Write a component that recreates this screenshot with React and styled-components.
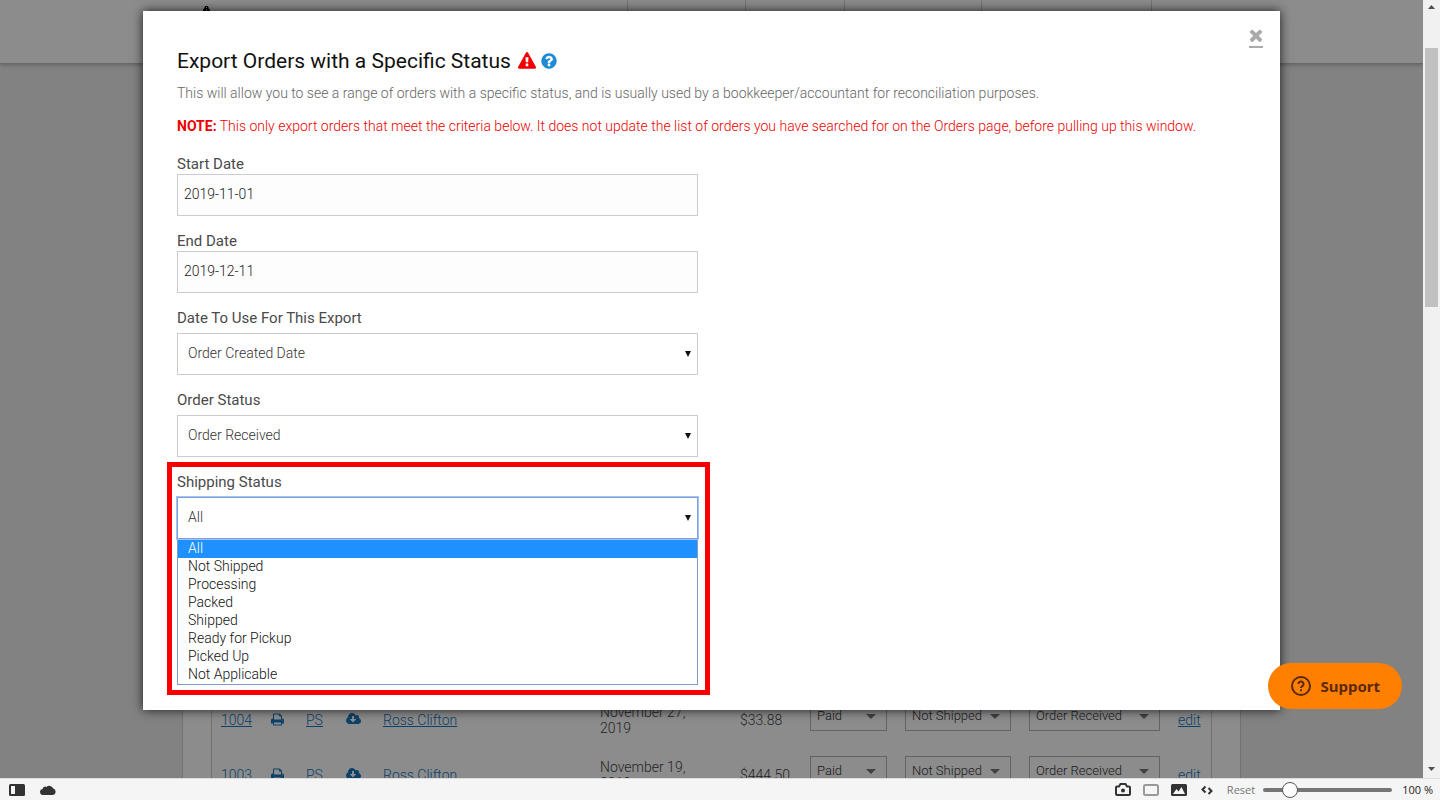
import { useState } from "react"
import styled, { createGlobalStyle } from "styled-components"

const GlobalStyle = createGlobalStyle`
* {
box-sizing: border-box;
}
body {
margin: 0;
font-family: Roboto, "Liberation Sans", sans-serif;
font-size: 14px;
font-weight: 300;
color: #222;
}
`
const Window = styled.div`
display: grid;
grid-template-rows: 1fr 22px;
height: 100vh;
overflow: hidden;
`
const Viewport = styled.div`
display: flex;
min-height: 0;
`
const Page = styled.div`
position: relative;
flex: 1;
display: flex;
flex-direction: column;
overflow: hidden;
background-color: #ededed;
`

/* page behind the popup */
const Header = styled.header`
flex: none;
height: 64px;
background-color: #fff;
border-bottom: 1px solid #bdbdbd;
box-shadow: 0 1px 4px rgba(0,0,0,0.25);
`
const HeaderInner = styled.div`
display: flex;
justify-content: space-between;
max-width: 1059px;
height: 100%;
margin: 0 auto;
padding-left: 20px;
`
const Nav = styled.nav`
display: grid;
grid-template-columns: 118px 99px 137px 170px 90px;
`
const NavCell = styled.span`
border-left: 1px solid #d2d2d2;
`
const Main = styled.main`
flex: 1;
display: flex;
flex-direction: column;
justify-content: flex-end;
width: 100%;
max-width: 1059px;
min-height: 0;
margin: 0 auto;
padding: 0 28px;
background-color: #fff;
border: solid #d0d0d0;
border-width: 0 1px;
`
const TableBox = styled.div`
flex: 1;
display: flex;
flex-direction: column;
justify-content: flex-end;
border: solid #d0d0d0;
border-width: 0 1px;
min-height: 0;
`
const Orders = styled.table`
width: 100%;
margin-bottom: -24px;
table-layout: fixed;
border-collapse: collapse;
`
const Cell = styled.td`
height: 55px;
padding: 0 0 0 9px;
line-height: 16px;
vertical-align: middle;
color: #444;
`
const PageLink = styled.a`
color: #1678be;
svg {
vertical-align: -1px;
}
`
const SmallSelect = styled.div`
position: relative;
display: flex;
width: ${props => props.$width}px;
margin-bottom: 8px;
select {
width: 100%;
height: 30px;
padding: 0 6px;
appearance: none;
background: none;
border: 1px solid #b4b4b4;
border-radius: 0;
font: inherit;
font-size: 13px;
color: #333;
}
svg {
position: absolute;
top: 13px;
right: 11px;
pointer-events: none;
}
`

/* popup */
const Overlay = styled.div`
position: absolute;
inset: 0;
padding-top: 11px;
background-color: rgba(0,0,0,0.45);
`
const Modal = styled.section`
display: flex;
flex-direction: column;
max-width: 1137px;
margin: 0 auto;
padding: 0 34px 15px;
position: relative;
background-color: #fff;
box-shadow: 0 0 10px rgba(0,0,0,0.8);
`
const CloseButton = styled.button`
position: absolute;
top: 18px;
right: 17px;
width: 14px;
height: 19px;
padding: 0 0 4px;
background: none;
border: none;
border-bottom: 2px solid #aaa;
color: #aaa;
cursor: pointer;
svg {
display: block;
}
`
const Title = styled.h1`
display: flex;
align-items: center;
gap: 7px;
margin: 36px 0 0;
font-size: 21px;
font-weight: 400;
line-height: 28px;
color: #111;
`
const TitleIcons = styled.span`
display: flex;
gap: 4px;
`
const TitleIcon = styled.span`
display: flex;
color: ${props => props.$color};
`
const Lead = styled.p`
margin: ${props => props.$top}px 0 0;
line-height: 20px;
color: ${props => props.$color};
b {
font-weight: 700;
}
`
const Form = styled.form`
display: flex;
flex-direction: column;
width: 521px;
max-width: 100%;
margin-top: 18px;
`
const Field = styled.div`
display: flex;
flex-direction: column;
gap: ${props => props.$gap}px;
margin-bottom: ${props => props.$last ? 0 : 15}px;
`
const Label = styled.label`
font-size: 15px;
font-weight: 400;
line-height: 20px;
color: #4a4a4a;
`
const Input = styled.input`
width: 100%;
height: 42px;
padding: 0 6px 2px;
background-color: #fdfdfd;
border: 1px solid #ccc;
border-radius: 0;
font: inherit;
color: #222;
`
const SelectBox = styled.div`
position: relative;
select {
display: block;
width: 100%;
height: 42px;
padding: 0 10px 3px;
appearance: none;
background-color: #fff;
border: 1px solid ${props => props.$open ? '#7da2d8' : '#ccc'};
border-radius: 0;
outline: ${props => props.$open ? '1px solid #a4c3f3' : 'none'};
font: inherit;
color: #333;
}
svg {
position: absolute;
top: 18px;
right: 7px;
pointer-events: none;
}
`
const Highlight = styled.div`
margin: -10px -12px 0 -10px;
padding: 5px 7px 5px 5px;
border: 5px solid #f80000;
`
const Options = styled.ul`
margin: 0;
padding: 0;
list-style: none;
border: 1px solid #7f9dc4;
`
const Option = styled.li`
padding: 0 10px 2px;
line-height: 16px;
color: ${props => props.$selected ? '#fff' : '#111'};
background-color: ${props => props.$selected ? '#1e90ff' : '#fff'};
cursor: pointer;
`
const Support = styled.button`
position: absolute;
right: 21px;
bottom: 69px;
display: flex;
align-items: center;
gap: 8px;
height: 46px;
padding: 0 22px;
background-color: #ff7f00;
border: none;
border-radius: 23px;
font-family: "Noto Sans", sans-serif;
font-size: 15px;
font-weight: 700;
color: #5c2a0a;
cursor: pointer;
`

/* browser chrome */
const Scrollbar = styled.div`
display: flex;
flex-direction: column;
align-items: center;
justify-content: space-between;
width: 17px;
padding: 5px 0 7px;
background-color: #f1f1f1;
`
const Track = styled.div`
flex: 1;
width: 13px;
padding-top: 39px;
`
const Thumb = styled.div`
height: 36%;
background-color: #c1c1c1;
`
const StatusBar = styled.footer`
display: flex;
align-items: center;
justify-content: space-between;
padding: 0 7px 0 9px;
background-color: #f5f5f5;
border-top: 1px solid #ddd;
font-family: "Open Sans", sans-serif;
font-size: 11px;
font-weight: 400;
line-height: 16px;
`
const BarGroup = styled.div`
display: flex;
align-items: center;
gap: ${props => props.$gap}px;
`
const BarButton = styled.button`
display: flex;
padding: 0;
background: none;
border: none;
font: inherit;
color: ${props => props.$muted ? '#777' : '#333'};
`
const Zoom = styled.input`
width: 129px;
height: 16px;
margin: 0 2px 0 0;
appearance: none;
background: none;
&::-webkit-slider-runnable-track {
height: 4px;
border-radius: 2px;
background-color: #757575;
}
&::-webkit-slider-thumb {
appearance: none;
width: 16px;
height: 16px;
margin-top: -6px;
border: 1px solid #555;
border-radius: 50%;
background-color: #fff;
}
`

const Triangle = ({ width, height, fill, up }) => (
    <svg width={width} height={height} viewBox="0 0 10 10" preserveAspectRatio="none" fill={fill} aria-hidden="true">
        <path d={up ? "M0 10L5 0L10 10Z" : "M0 0H10L5 10Z"} />
    </svg>
)
const Icon = ({ d, width, height, box = "0 0 1792 1792" }) => (
    <svg width={width} height={height} viewBox={box} fill="currentColor" aria-hidden="true">
        <path d={d} />
    </svg>
)

const printPath = "M448 1536h896v-256h-896v256zm0-640h896v-384h-160q-40 0-68-28t-28-68v-160h-640v640zm1152 64q0-26-19-45t-45-19-45 19-19 45 19 45 45 19 45-19 19-45zm128 0v416q0 13-9.5 22.5t-22.5 9.5h-224v160q0 40-28 68t-68 28h-960q-40 0-68-28t-28-68v-160h-224q-13 0-22.5-9.5t-9.5-22.5v-416q0-79 56.5-135.5t135.5-56.5h64v-544q0-40 28-68t68-28h672q40 0 88 20t76 48l152 152q28 28 48 76t20 88v256h64q79 0 135.5 56.5t56.5 135.5z"
const cloudPath = "M1216 928q0-14-9-23t-23-9h-224v-352q0-13-9.5-22.5t-22.5-9.5h-192q-13 0-22.5 9.5t-9.5 22.5v352h-224q-13 0-22.5 9.5t-9.5 22.5q0 14 9 23l352 352q9 9 23 9t23-9l351-351q10-12 10-24zm640 224q0 159-112.5 271.5t-271.5 112.5h-1088q-185 0-316.5-131.5t-131.5-316.5q0-130 70-240t188-165q-2-30-2-43 0-212 150-362t362-150q156 0 285.5 87t188.5 231q71-62 166-62 106 0 181 75t75 181q0 76-41 138 130 31 213.5 135.5t83.5 238.5z"
const warnPath = "M1024 1375v-190q0-14-9.5-23.5t-22.5-9.5h-192q-13 0-22.5 9.5t-9.5 23.5v190q0 14 9.5 23.5t22.5 9.5h192q13 0 22.5-9.5t9.5-23.5zm-2-374l18-459q0-12-10-19-13-11-24-11h-220q-11 0-24 11-10 7-10 21l17 457q0 10 10 16.5t24 6.5h185q14 0 23.5-6.5t10.5-16.5zm-14-934l768 1408q35 63-2 126-17 29-46.5 46t-63.5 17h-1536q-34 0-63.5-17t-46.5-46q-37-63-2-126l768-1408q17-31 47-49t65-18 65 18 47 49z"
const helpPath = "M1024 1376v-192q0-14-9-23t-23-9h-192q-14 0-23 9t-9 23v192q0 14 9 23t23 9h192q14 0 23-9t9-23zm256-672q0-88-55.5-163t-138.5-116-170-41q-243 0-371 213-15 24 8 42l132 100q7 6 19 6 16 0 25-12 53-68 86-92 34-24 86-24 48 0 85.5 26t37.5 59q0 38-20 61t-68 45q-63 28-115.5 86.5t-52.5 125.5v36q0 14 9 23t23 9h192q14 0 23-9t9-23q0-19 21.5-49.5t54.5-49.5q32-18 49-28.5t46-35 44.5-48 28-60.5 12.5-81zm384 192q0 209-103 385.5t-279.5 279.5-385.5 103-385.5-103-279.5-279.5-103-385.5 103-385.5 279.5-279.5 385.5-103 385.5 103 279.5 279.5 103 385.5z"
const closePath = "M1490 1322q0 40-28 68l-136 136q-28 28-68 28t-68-28l-294-294-294 294q-28 28-68 28t-68-28l-136-136q-28-28-28-68t28-68l294-294-294-294q-28-28-28-68t28-68l136-136q28-28 68-28t68 28l294 294 294-294q28-28 68-28t68 28l136 136q28 28 28 68t-28 68l-294 294 294 294q28 28 28 68z"

const columns = [50, 35, 40, 37, 217, 140, 70, 95, 124, 149, 42]
const orders = [
    { id: "1004", name: "Ross Clifton", day: "November 27,", year: "2019", total: "$33.88" },
    { id: "1003", name: "Ross Clifton", day: "November 19,", year: "2019", total: "$444.50" },
]
const shipping = ["All", "Not Shipped", "Processing", "Packed", "Shipped", "Ready for Pickup", "Picked Up", "Not Applicable"]

const RowSelect = ({ value, width, label }) => (
    <SmallSelect $width={width}>
        <select aria-label={label}>
            <option>{value}</option>
        </select>
        <Triangle width={10} height={5} fill="#777" />
    </SmallSelect>
)

const OrderRow = ({ order }) => (
    <tr>
        <Cell><PageLink href="#order">{order.id}</PageLink></Cell>
        <Cell>
            <PageLink href="#print" aria-label="Print"><Icon d={printPath} width={13} height={13} box="64 64 1664 1664" /></PageLink>
        </Cell>
        <Cell><PageLink href="#slip">PS</PageLink></Cell>
        <Cell>
            <PageLink href="#download" aria-label="Download"><Icon d={cloudPath} width={15} height={14} box="-64 0 1920 1792" /></PageLink>
        </Cell>
        <Cell><PageLink href="#customer">{order.name}</PageLink></Cell>
        <Cell>{order.day}<br />{order.year}</Cell>
        <Cell>{order.total}</Cell>
        <Cell><RowSelect value="Paid" width={77} label="Payment" /></Cell>
        <Cell><RowSelect value="Not Shipped" width={106} label="Shipping" /></Cell>
        <Cell><RowSelect value="Order Received" width={131} label="Status" /></Cell>
        <Cell><PageLink href="#edit">edit</PageLink></Cell>
    </tr>
)

const SelectField = ({ id, label, options, value, onChange, open }) => (
    <>
        <Label htmlFor={id}>{label}</Label>
        <SelectBox $open={open}>
            <select id={id} value={value} onChange={onChange}>
                {options.map(option => <option key={option}>{option}</option>)}
            </select>
            <Triangle width={6} height={6} fill="#111" />
        </SelectBox>
    </>
)

const App = () => {
    const [start, setStart] = useState("2019-11-01")
    const [end, setEnd] = useState("2019-12-11")
    const [status, setStatus] = useState("All")
    const [zoom, setZoom] = useState(17)
    return (
        <Window>
            <GlobalStyle />
            <Viewport>
                <Page>
                    <Header>
                        <HeaderInner>
                            <svg width="9" height="16" viewBox="0 0 9 16" aria-hidden="true">
                                <path d="M3 6h3l1 3h1v3h-7v-3h1z" fill="#000" />
                                <path d="M4 7h1v1h-1zM4 9h1v1h-1z" fill="#ddd" />
                            </svg>
                            <Nav>
                                <NavCell /><NavCell /><NavCell /><NavCell /><NavCell />
                            </Nav>
                        </HeaderInner>
                    </Header>
                    <Main>
                        <TableBox>
                            <Orders>
                                <colgroup>
                                    {columns.map((width, i) => <col key={i} style={{ width }} />)}
                                </colgroup>
                                <tbody>
                                    {orders.map(order => <OrderRow key={order.id} order={order} />)}
                                </tbody>
                            </Orders>
                        </TableBox>
                    </Main>
                    <Overlay>
                        <Modal role="dialog" aria-labelledby="title">
                            <CloseButton aria-label="Close"><Icon d={closePath} width={14} height={13} box="302 302 1188 1252" /></CloseButton>
                            <Title id="title">
                                Export Orders with a Specific Status
                                <TitleIcons>
                                    <TitleIcon $color="#f00000"><Icon d={warnPath} width={18} height={18} /></TitleIcon>
                                    <TitleIcon $color="#1f8ad6"><Icon d={helpPath} width={18} height={18} /></TitleIcon>
                                </TitleIcons>
                            </Title>
                            <Lead $top={8} $color="#666">This will allow you to see a range of orders with a specific status, and is usually used by a bookkeeper/accountant for reconciliation purposes.</Lead>
                            <Lead $top={13} $color="#f00000"><b>NOTE:</b> This only export orders that meet the criteria below. It does not update the list of orders you have searched for on the Orders page, before pulling up this window.</Lead>
                            <Form>
                                <Field $gap={0}>
                                    <Label htmlFor="start">Start Date</Label>
                                    <Input id="start" value={start} onChange={e => setStart(e.target.value)} />
                                </Field>
                                <Field $gap={0}>
                                    <Label htmlFor="end">End Date</Label>
                                    <Input id="end" value={end} onChange={e => setEnd(e.target.value)} />
                                </Field>
                                <Field $gap={5}>
                                    <SelectField id="date" label="Date To Use For This Export" options={["Order Created Date"]} />
                                </Field>
                                <Field $gap={5}>
                                    <SelectField id="order" label="Order Status" options={["Order Received"]} />
                                </Field>
                                <Highlight>
                                    <Field $gap={5} $last>
                                        <SelectField id="ship" label="Shipping Status" options={shipping} value={status} onChange={e => setStatus(e.target.value)} open />
                                    </Field>
                                    <Options role="listbox" aria-label="Shipping Status">
                                        {shipping.map(option => (
                                            <Option key={option} role="option" aria-selected={option === status} $selected={option === status} onClick={() => setStatus(option)}>
                                                {option}
                                            </Option>
                                        ))}
                                    </Options>
                                </Highlight>
                            </Form>
                        </Modal>
                    </Overlay>
                    <Support>
                        <svg width="22" height="22" viewBox="0 0 22 22" fill="none" stroke="currentColor" strokeWidth="2" aria-hidden="true">
                            <circle cx="11" cy="11" r="9" />
                            <path d="M8.5 9a2.5 2.5 0 1 1 3.7 2.1q-1.2 .7-1.2 2M11 14.3v2" />
                        </svg>
                        Support
                    </Support>
                </Page>
                <Scrollbar>
                    <Triangle width={7} height={4} fill="#505050" up />
                    <Track><Thumb /></Track>
                    <Triangle width={7} height={4} fill="#505050" />
                </Scrollbar>
            </Viewport>
            <StatusBar>
                <BarGroup $gap={15}>
                    <BarButton aria-label="Panel">
                        <svg width="16" height="12" viewBox="0 0 16 12">
                            <rect width="16" height="12" rx="1.5" fill="#333" />
                            <rect x="2" y="2" width="4" height="8" fill="#f5f5f5" />
                        </svg>
                    </BarButton>
                    <BarButton aria-label="Sync">
                        <svg width="16" height="12" viewBox="0 0 16 12" fill="#333">
                            <path d="M3.5 11A3 3 0 0 1 2.6 5A2.6 2.6 0 0 1 6.5 3A4 4 0 0 1 13.2 4.6A3.3 3.3 0 0 1 13 11Z" />
                        </svg>
                    </BarButton>
                </BarGroup>
                <BarGroup $gap={12}>
                    <BarButton aria-label="Capture">
                        <svg width="16" height="13" viewBox="0 0 16 13" fill="none" stroke="#333" strokeWidth="2">
                            <path d="M2 3.5h2l1.5-2.5h5L12 3.5h2q1 0 1 1v6.500q0 1-1 1H2q-1 0-1-1V4.500q0-1 1-1z" />
                            <circle cx="8" cy="7.5" r="1" />
                        </svg>
                    </BarButton>
                    <BarButton aria-label="Tiling">
                        <svg width="16" height="12" viewBox="0 0 16 12" fill="none" stroke="#999" strokeWidth="2">
                            <rect x="1" y="1" width="14" height="10" rx="1.5" />
                        </svg>
                    </BarButton>
                    <BarButton aria-label="Images">
                        <svg width="16" height="12" viewBox="0 0 16 12">
                            <rect width="16" height="12" rx="1.5" fill="#333" />
                            <path d="M2 10l3.5-5 2 2.5 3-4.5L14 10z" fill="#f5f5f5" />
                        </svg>
                    </BarButton>
                    <BarButton aria-label="Page actions">
                        <svg width="16" height="12" viewBox="0 0 16 12" fill="none" stroke="#333" strokeWidth="2">
                            <path d="M6.5 2.5L3.5 5.5L6.5 8.5M9.5 4L12.5 7L9.5 10" />
                        </svg>
                    </BarButton>
                    <BarGroup $gap={8}>
                        <BarButton $muted>Reset</BarButton>
                        <Zoom type="range" aria-label="Zoom" value={zoom} onChange={e => setZoom(e.target.value)} />
                        <span>100 %</span>
                    </BarGroup>
                </BarGroup>
            </StatusBar>
        </Window>
    )
}

export default App
